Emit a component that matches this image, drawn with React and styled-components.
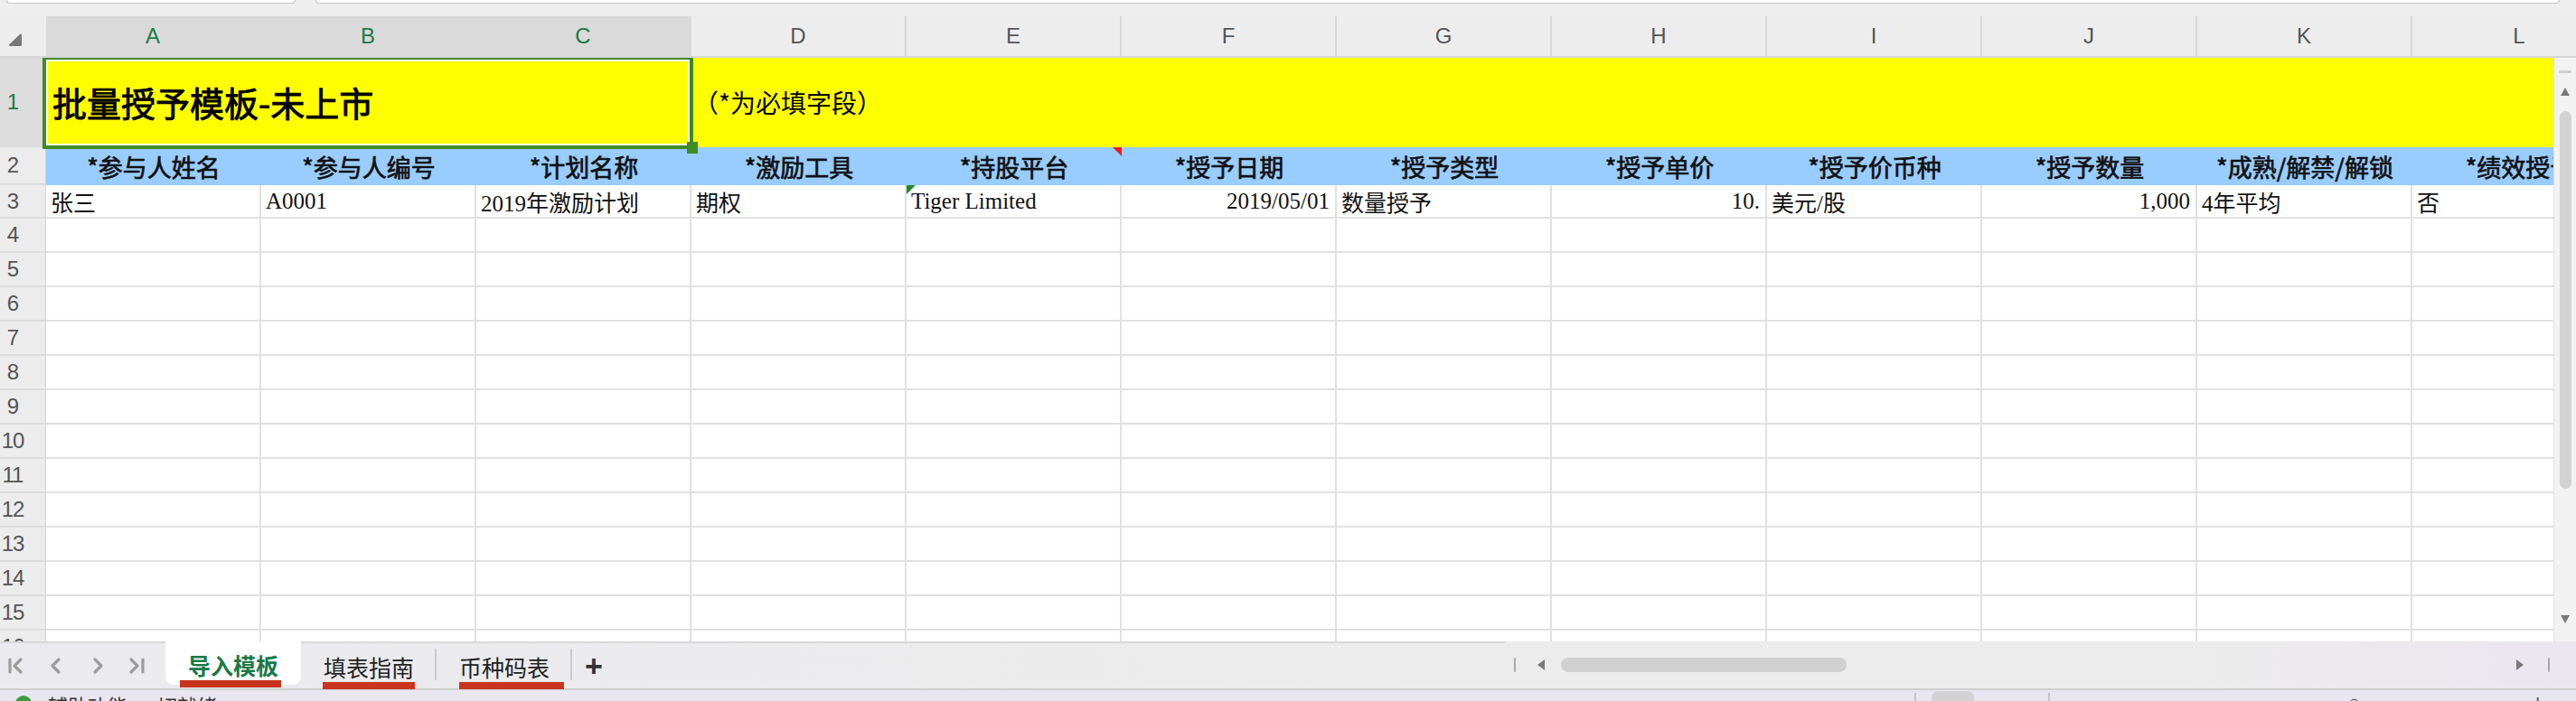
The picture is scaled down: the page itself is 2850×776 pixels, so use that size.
import React from 'react'
import styled, { createGlobalStyle } from 'styled-components'

const GlobalStyle = createGlobalStyle`
  html, body {
    margin: 0;
    padding: 0;
    background: #ececec;
    overflow: hidden;
  }
  #root {
    width: 2850px;
    height: 776px;
  }
`;

const COL_W = 238;
const UI_FONT = `"Liberation Sans", "Noto Sans CJK SC", sans-serif`;
const CJK_FONT = `"Noto Sans CJK SC", "Liberation Sans", sans-serif`;
const CELL_FONT = `"Liberation Serif", "Noto Sans CJK SC", serif`;

const letters = ['A', 'B', 'C', 'D', 'E', 'F', 'G', 'H', 'I', 'J', 'K', 'L'];
const headers = [
  '*参与人姓名', '*参与人编号', '*计划名称', '*激励工具', '*持股平台', '*授予日期',
  '*授予类型', '*授予单价', '*授予价币种', '*授予数量', '*成熟/解禁/解锁', '*绩效授予',
];
const record = [
  { v: '张三' },
  { v: 'A0001' },
  { v: '2019年激励计划' },
  { v: '期权' },
  { v: 'Tiger Limited', flag: true },
  { v: '2019/05/01', right: true },
  { v: '数量授予' },
  { v: '10.', right: true },
  { v: '美元/股' },
  { v: '1,000', right: true },
  { v: '4年平均' },
  { v: '否' },
];
const emptyRows = [4, 5, 6, 7, 8, 9, 10, 11, 12, 13, 14, 15, 16];
const tabs = [
  { name: '导入模板', active: true, mark: [16, 112] },
  { name: '填表指南', mark: [24, 102] },
  { name: '币种码表', mark: [25, 116] },
];

const App = () => {
  return (
    <>
      <GlobalStyle />
      <Page>
        <TopStrip>
          <FieldBox $w="318px" />
          <FieldBox $grow />
        </TopStrip>

        <ColHeaderRow>
          <Corner>
            <svg width="16" height="15" viewBox="0 0 16 15">
              <path d="M14 1.5 L14 13 L2 13 Z" fill="#777" stroke="#777" strokeWidth="2" strokeLinejoin="round" />
            </svg>
          </Corner>
          {letters.map((l, i) => (
            <ColHead key={l} $sel={i < 3}>{l}</ColHead>
          ))}
        </ColHeaderRow>

        <Body>
          <Grid>
            <Row $h={99}>
              <RowHead $sel><Num>1</Num></RowHead>
              <TitleCell>
                批量授予模板-未上市
                <SelectionFrame>
                  <FillHandle />
                </SelectionFrame>
              </TitleCell>
              <NoteCell>（*为必填字段）</NoteCell>
            </Row>

            <Row $h={42}>
              <RowHead><Num>2</Num></RowHead>
              {headers.map((h, i) => (
                <HeadCell key={h}>
                  {h}
                  {i === 4 && <Marker $corner="right" $color="#ee1c1c" />}
                </HeadCell>
              ))}
            </Row>

            <Row $h={37}>
              <RowHead><Num>3</Num></RowHead>
              {record.map((c, i) => (
                <DataCell key={i} $right={c.right}>
                  {c.v}
                  {c.flag && <Marker $corner="left" $color="#1f8a2a" />}
                </DataCell>
              ))}
            </Row>

            {emptyRows.map((n) => (
              <Row key={n} $h={38}>
                <RowHead><Num>{n}</Num></RowHead>
                {letters.map((l) => (
                  <DataCell key={l} />
                ))}
              </Row>
            ))}
          </Grid>

          <VScroll>
            <Dash />
            <ScrollArrow $dir="up" $mt="16px" />
            <VThumb />
            <Spacer />
            <ScrollArrow $dir="down" $mb="20px" />
          </VScroll>
        </Body>

        <TabBar>
          <TabStrip>
            <Nav>
              <NavIcon width="20" height="20" viewBox="0 0 20 20" $ml="8px">
                <path d="M3 3 V17 M15 3 L8 10 L15 17" />
              </NavIcon>
              <NavIcon width="14" height="20" viewBox="0 0 14 20" $ml="26px">
                <path d="M11 3 L4 10 L11 17" />
              </NavIcon>
              <NavIcon width="14" height="20" viewBox="0 0 14 20" $ml="34px">
                <path d="M3 3 L10 10 L3 17" />
              </NavIcon>
              <NavIcon width="20" height="20" viewBox="0 0 20 20" $ml="25px">
                <path d="M4 3 L11 10 L4 17 M17 3 V17" />
              </NavIcon>
            </Nav>
            {tabs.map((t) => (
              <Tab key={t.name} $active={t.active}>
                {t.name}
                <Underline style={{ left: t.mark[0], width: t.mark[1] }} />
              </Tab>
            ))}
            <AddTab>+</AddTab>
          </TabStrip>

          <HScroll>
            <EndBar />
            <ScrollArrow $dir="left" $ml="24px" />
            <HThumb />
            <Spacer />
            <ScrollArrow $dir="right" />
            <EndBar $ml="27px" />
          </HScroll>
        </TabBar>

        <StatusBar>
          <StatusDot />
          <StatusText>辅助功能: 一切就绪</StatusText>
          <Spacer />
          <StatusGlyph>▬</StatusGlyph>
          <StatusDivider $ml="64px" />
          <ViewButton />
          <StatusDivider $ml="82px" />
          <StatusGlyph $ml="330px">○</StatusGlyph>
          <StatusGlyph $ml="190px">+</StatusGlyph>
          <StatusGap />
        </StatusBar>
      </Page>
    </>
  )
}

export default App

const Page = styled.div`
  width: 2850px;
  height: 776px;
  display: flex;
  flex-direction: column;
  background: #ececec;
  font-family: ${UI_FONT};
  overflow: hidden;
`;

const TopStrip = styled.div`
  height: 18px;
  flex-shrink: 0;
  display: flex;
  align-items: flex-start;
  gap: 22px;
  padding: 0 18px 0 7px;
  box-sizing: border-box;
  background: #eeeeee;
`;

const FieldBox = styled.div`
  height: 3px;
  width: ${(p) => p.$w || 'auto'};
  flex: ${(p) => (p.$grow ? 1 : '0 0 auto')};
  background: #fff;
  border: 1.5px solid #c6c6c6;
  border-top: none;
  border-radius: 0 0 9px 9px;
`;

const ColHeaderRow = styled.div`
  height: 46px;
  flex-shrink: 0;
  display: flex;
  background: #ededed;
  border-bottom: 2px solid #d6d6d6;
  box-sizing: border-box;
  overflow: hidden;
`;

const Corner = styled.div`
  width: 51px;
  flex-shrink: 0;
  display: flex;
  align-items: flex-end;
  padding: 0 0 10px 9px;
  box-sizing: border-box;
`;

const ColHead = styled.div`
  width: ${COL_W}px;
  flex-shrink: 0;
  display: flex;
  align-items: center;
  justify-content: center;
  box-sizing: border-box;
  font-size: 24px;
  color: ${(p) => (p.$sel ? '#1d7a48' : '#555')};
  background: ${(p) => (p.$sel ? '#dadada' : 'transparent')};
  border-right: 2px solid ${(p) => (p.$sel ? 'transparent' : '#d8d8d8')};
`;

const Body = styled.div`
  height: 646px;
  flex-shrink: 0;
  display: flex;
  overflow: hidden;
`;

const Grid = styled.div`
  width: 2825px;
  flex-shrink: 0;
  display: flex;
  flex-direction: column;
  overflow: hidden;
  background: #fff;
`;

const Row = styled.div`
  height: ${(p) => p.$h}px;
  flex-shrink: 0;
  display: flex;
`;

const RowHead = styled.div`
  width: 51px;
  flex-shrink: 0;
  display: flex;
  align-items: center;
  box-sizing: border-box;
  background: ${(p) => (p.$sel ? '#dcdcdc' : '#ececec')};
  border-right: 1px solid #d2d2d2;
  border-bottom: 2px solid #dcdcdc;
  font-size: 24px;
  color: ${(p) => (p.$sel ? '#1d7a48' : '#555')};
`;

const Num = styled.span`
  width: 28px;
  text-align: center;
  letter-spacing: -1px;
`;

const TitleCell = styled.div`
  width: ${COL_W * 3}px;
  flex-shrink: 0;
  position: relative;
  display: flex;
  align-items: center;
  padding: 0 0 2px 7px;
  box-sizing: border-box;
  background: #ffff00;
  font-family: ${CJK_FONT};
  font-size: 38px;
  font-weight: 400;
  -webkit-text-stroke: 0.9px #000;
  color: #000;
`;

const SelectionFrame = styled.div`
  position: absolute;
  top: -2px;
  left: -4px;
  right: -2px;
  bottom: -2px;
  border: 4px solid #3f8c25;
  box-shadow: inset 0 0 0 2px #fff;
  pointer-events: none;
  z-index: 2;
`;

const FillHandle = styled.div`
  position: absolute;
  right: -9px;
  bottom: -9px;
  width: 12px;
  height: 13px;
  background: #3f8c25;
`;

const NoteCell = styled.div`
  width: ${COL_W * 9}px;
  flex-shrink: 0;
  display: flex;
  align-items: center;
  padding: 0 0 2px 2px;
  box-sizing: border-box;
  background: #ffff00;
  font-family: ${CJK_FONT};
  font-size: 28px;
  color: #000;
`;

const HeadCell = styled.div`
  width: ${COL_W}px;
  flex-shrink: 0;
  position: relative;
  display: flex;
  align-items: center;
  justify-content: center;
  background: #99ccff;
  font-family: ${CJK_FONT};
  font-size: 27px;
  font-weight: 400;
  -webkit-text-stroke: 0.7px #111;
  color: #111;
  white-space: nowrap;
`;

const Marker = styled.span`
  position: absolute;
  top: 0;
  ${(p) => p.$corner}: 0;
  width: 0;
  height: 0;
  border-top: 10px solid ${(p) => p.$color};
  ${(p) => (p.$corner === 'right' ? 'border-left' : 'border-right')}: 10px solid transparent;
`;

const DataCell = styled.div`
  width: ${COL_W}px;
  flex-shrink: 0;
  position: relative;
  display: flex;
  align-items: center;
  justify-content: ${(p) => (p.$right ? 'flex-end' : 'flex-start')};
  padding: 0 6px 0 5px;
  box-sizing: border-box;
  background: #fff;
  border-right: 2px solid #e1e1e1;
  border-bottom: 2px solid #e1e1e1;
  font-family: ${CELL_FONT};
  font-size: 25px;
  color: #111;
  white-space: nowrap;
`;

const VScroll = styled.div`
  width: 25px;
  flex-shrink: 0;
  display: flex;
  flex-direction: column;
  align-items: center;
  background: #f2f2f2;
  border-left: 1px solid #e2e2e2;
  box-sizing: border-box;
`;

const Dash = styled.div`
  width: 14px;
  height: 3px;
  margin-top: 14px;
  border-radius: 2px;
  background: #cfcfcf;
`;

const arrowShapes = {
  up: 'border-left: 5px solid transparent; border-right: 5px solid transparent; border-bottom: 9px solid #7a7a7a;',
  down: 'border-left: 5px solid transparent; border-right: 5px solid transparent; border-top: 9px solid #7a7a7a;',
  left: 'border-top: 6px solid transparent; border-bottom: 6px solid transparent; border-right: 8px solid #7a7a7a;',
  right: 'border-top: 6px solid transparent; border-bottom: 6px solid transparent; border-left: 8px solid #7a7a7a;',
};

const ScrollArrow = styled.span`
  width: 0;
  height: 0;
  flex-shrink: 0;
  margin-top: ${(p) => p.$mt || 0};
  margin-bottom: ${(p) => p.$mb || 0};
  margin-left: ${(p) => p.$ml || 0};
  ${(p) => arrowShapes[p.$dir]}
`;

const VThumb = styled.div`
  width: 13px;
  height: 418px;
  margin-top: 17px;
  border-radius: 7px;
  background: #d2d2d2;
`;

const Spacer = styled.div`
  flex: 1;
`;

const TabBar = styled.div`
  height: 52px;
  flex-shrink: 0;
  display: flex;
  background: linear-gradient(90deg, #ebeaee 0%, #ececec 55%, #ececec 85%, #ece6ef 100%);
`;

const TabStrip = styled.div`
  width: 1665px;
  flex-shrink: 0;
  display: flex;
  align-items: flex-start;
  border-top: 2px solid #d8d8d8;
  box-sizing: border-box;
`;

const Nav = styled.div`
  width: 183px;
  height: 50px;
  flex-shrink: 0;
  display: flex;
  align-items: center;
`;

const NavIcon = styled.svg`
  flex-shrink: 0;
  margin-left: ${(p) => p.$ml};
  fill: none;
  stroke: #9d9d9d;
  stroke-width: 3.2;
  stroke-linecap: round;
  stroke-linejoin: round;
`;

const Tab = styled.div`
  position: relative;
  height: 48px;
  margin-top: ${(p) => (p.$active ? '-2px' : '0')};
  padding: 4px 25px 0;
  box-sizing: border-box;
  display: flex;
  align-items: center;
  flex-shrink: 0;
  font-family: ${CJK_FONT};
  font-size: 25px;
  font-weight: ${(p) => (p.$active ? 700 : 400)};
  color: ${(p) => (p.$active ? '#1a7a46' : '#222')};
  background: ${(p) => (p.$active ? '#fff' : 'transparent')};
  border-radius: 0 0 9px 9px;

  &::after {
    content: '';
    display: ${(p) => (p.$active ? 'none' : 'block')};
    position: absolute;
    right: 0;
    top: 6px;
    width: 2px;
    height: 35px;
    background: #cbcbcb;
  }
`;

const Underline = styled.span`
  position: absolute;
  bottom: -3px;
  height: 8px;
  background: #c9341f;
`;

const AddTab = styled.div`
  height: 48px;
  display: flex;
  align-items: center;
  margin-left: 14px;
  padding-top: 2px;
  box-sizing: border-box;
  font-family: ${UI_FONT};
  font-size: 34px;
  font-weight: 700;
  color: #333;
`;

const HScroll = styled.div`
  flex: 1;
  display: flex;
  align-items: center;
  padding: 0 29px 0 10px;
`;

const EndBar = styled.span`
  width: 2px;
  height: 16px;
  flex-shrink: 0;
  margin-left: ${(p) => p.$ml || 0};
  background: #a9a9a9;
  border-radius: 1px;
`;

const HThumb = styled.div`
  width: 316px;
  height: 16px;
  flex-shrink: 0;
  margin-left: 18px;
  border-radius: 8px;
  background: #d0d0d0;
`;

const StatusBar = styled.div`
  height: 14px;
  flex-shrink: 0;
  display: flex;
  align-items: flex-start;
  padding-left: 17px;
  box-sizing: border-box;
  border-top: 2px solid #cfcfcf;
  background: #e8e6ee;
  overflow: hidden;
`;

const StatusDot = styled.span`
  width: 18px;
  height: 18px;
  margin-top: 6px;
  flex-shrink: 0;
  border-radius: 50%;
  background: #3e9a3a;
`;

const StatusText = styled.span`
  margin: 5px 0 0 18px;
  font-family: ${CJK_FONT};
  font-size: 22px;
  line-height: 22px;
  color: #333;
  white-space: nowrap;
`;

const StatusGlyph = styled.span`
  margin: 3px 0 0 ${(p) => p.$ml || 0};
  font-size: 22px;
  line-height: 22px;
  color: #444;
`;

const StatusDivider = styled.span`
  width: 2px;
  height: 14px;
  margin-top: 3px;
  margin-left: ${(p) => p.$ml};
  background: #c4c4c4;
`;

const ViewButton = styled.span`
  width: 47px;
  height: 20px;
  margin: 1px 0 0 17px;
  border-radius: 8px;
  background: #d2d2d4;
`;

const StatusGap = styled.span`
  width: 36px;
`;
